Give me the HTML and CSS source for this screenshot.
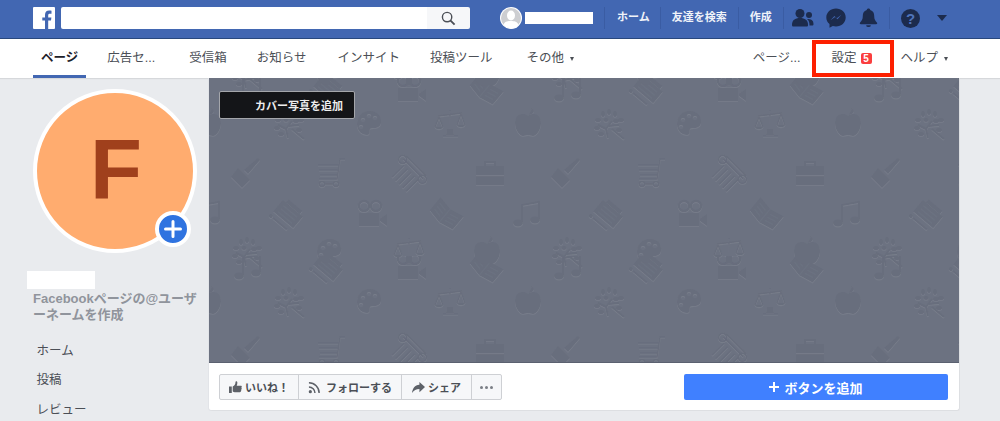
FILE: index.html
```html
<!DOCTYPE html>
<html lang="ja">
<head>
<meta charset="utf-8">
<title>Facebook ページ</title>
<link rel="stylesheet" href="styles.css">
</head>
<body>
<header class="topbar">
  <svg class="logo" viewBox="0 0 22 22"><rect width="22" height="22" rx="1" fill="#fff"/><path d="M15.2 22v-8.4h2.8l.4-3.2h-3.2V8.300c0-.9.300-1.600 1.700-1.600h1.600V3.800c-.5-.1-1.400-.2-2.400-.2-2.500 0-4.100 1.500-4.100 4.300v2.500H9.300v3.200H12V22z" fill="#4267b2"/></svg>
  <div class="search">
    <div class="search-input"></div>
    <div class="search-btn"><svg viewBox="0 0 16 16" width="15" height="15"><circle cx="6.500" cy="6.500" r="5" fill="none" stroke="#4b4f56" stroke-width="1.500"/><path d="M10.200 10.200l4.300 4.300" stroke="#4b4f56" stroke-width="2"/></svg></div>
  </div>
  <div class="top-right">
    <div class="me">
      <svg class="avatar" viewBox="0 0 22 22"><circle cx="11" cy="11" r="11" fill="#fff"/><circle cx="11" cy="11" r="10" fill="#cdced1"/><ellipse cx="11" cy="8.500" rx="4" ry="5" fill="#fff"/><path d="M3.500 18c1-3.500 4-4 7.500-4s6.500.5 7.500 4a10 10 0 0 1-15 0z" fill="#fff"/></svg>
      <span class="redact-name"></span>
    </div>
    <a class="top-link first">ホーム</a>
    <a class="top-link">友達を検索</a>
    <a class="top-link">作成</a>
    <div class="top-icons">
      <svg class="ti" viewBox="0 0 22 20" width="22" height="20"><circle cx="8" cy="5.500" r="4.500" fill="#1c2b4d"/><path d="M0 17c0-5 3-7 8-7s8 2 8 7c0 1-.5 1.500-1.500 1.500h-13C.5 18.500 0 18 0 17z" fill="#1c2b4d"/><circle cx="17" cy="7" r="3" fill="#1c2b4d"/><path d="M15 11c4 0 6.500 1 6.500 5 0 1-.5 1.500-1.500 1.500h-2.500c0-3-.5-5-2.500-6.500z" fill="#1c2b4d"/></svg>
      <svg class="ti" viewBox="0 0 20 20" width="20" height="20"><path d="M10 .500C4.500.500.300 4.400.300 9.400c0 2.700 1.200 5 3.200 6.700v3.700l3.300-1.800c1 .3 2.100.4 3.200.4 5.500 0 9.700-3.900 9.700-9S15.500.500 10 .500z" fill="#1c2b4d"/><path d="M4.500 12.300l3.900-4.400 2.400 2.300 4.600-3.400-3.900 4.500-2.400-2.300z" fill="#4267b2"/></svg>
      <svg class="ti" viewBox="0 0 20 20" width="19" height="20"><path d="M10 0c1 0 1.700.6 1.800 1.500C15 2.300 16 5 16 8c0 3.500 1 5 3 7 .5.800 0 1.500-1 1.500H2c-1 0-1.500-.7-1-1.500 2-2 3-3.500 3-7 0-3 1-5.700 4.200-6.500C8.300.600 9 0 10 0z" fill="#1c2b4d"/><path d="M7.500 17.500h5a2.500 2 0 0 1-5 0z" fill="#1c2b4d"/></svg>
      <span class="ti-sep"></span>
      <span class="help">?</span>
      <span class="top-caret"></span>
    </div>
  </div>
</header>

<nav class="subnav">
  <a class="tab active">ページ</a>
  <a class="tab wide">広告セ...</a>
  <a class="tab tight">受信箱</a>
  <a class="tab">お知らせ</a>
  <a class="tab tight">インサイト</a>
  <a class="tab wide">投稿ツール</a>
  <a class="tab">その他<span class="mini-caret"></span></a>
  <div class="subnav-right">
    <a class="tab">ページ...</a>
    <a class="tab settings">設定<span class="count">5</span></a>
    <a class="tab">ヘルプ<span class="mini-caret"></span></a>
  </div>
</nav>

<main class="page">
  <aside class="side">
    <div class="profile">
      <span class="initial">F</span>
      <span class="add-photo"><svg viewBox="0 0 18 18" width="18" height="18"><path d="M9 1.500v15M1.500 9h15" stroke="#fff" stroke-width="3" stroke-linecap="round"/></svg></span>
    </div>
    <div class="redact-page"></div>
    <p class="username">Facebookページの@ユーザ<br>ーネームを作成</p>
    <ul class="menu">
      <li>ホーム</li>
      <li>投稿</li>
      <li>レビュー</li>
    </ul>
  </aside>

  <section class="card">
    <div class="cover">
      <svg class="cover-art" xmlns="http://www.w3.org/2000/svg" aria-hidden="true">
        <defs>
          <filter id="emboss" x="-5%" y="-5%" width="110%" height="110%">
            <feDropShadow dx="0" dy="1" stdDeviation="0.400" flood-color="#fff" flood-opacity="0.060"/>
          </filter>
          <g id="i-tree"><path d="M-1 15L-3 6-11 2M-3 6L3-2M0 3L10 2M3 6L15 16" fill="none" stroke-width="2"/><ellipse cx="-11" cy="-3" rx="3" ry="2"/><ellipse cx="-6" cy="-9" rx="2" ry="3"/><ellipse cx="0" cy="-11" rx="2" ry="3"/><ellipse cx="6" cy="-9" rx="2" ry="3"/><ellipse cx="12" cy="-3" rx="3" ry="2"/><ellipse cx="-12" cy="5" rx="3" ry="2"/><ellipse cx="-3" cy="-3" rx="2.500" ry="2"/><ellipse cx="7" cy="-2" rx="3" ry="2"/><ellipse cx="-8" cy="11" rx="3" ry="2"/><ellipse cx="10" cy="7" rx="3" ry="2"/></g>
          <g id="i-palette"><path fill-rule="evenodd" d="M1-12C-8-12-12-5-12 1c0 7 5 11 10 11 4 0 2-4 3-6 1-2 10 1 11-6C13-7 8-12 1-12zM-6-5a2.200 2.200 0 1 0 .01 0zM0-9a2.200 2.200 0 1 0 .01 0zM6-7a2.200 2.200 0 1 0 .01 0zM-8 2a2.200 2.200 0 1 0 .01 0z"/></g>
          <g id="i-scales"><path d="M0-13V12M-12-7L12-10M-7 13H8M-11-6L-15 4M-11-6L-7 4M11-9L7 2M11-9L15 2" fill="none" stroke-width="1.300"/><path d="M-15 4h8c-.5 3-7.500 3-8 0zM7 2h8c-.5 3-7.500 3-8 0zM-3 6h6l1 6H-4z"/></g>
          <g id="i-apple"><path d="M0-7C-5-11-13-9-13 0c0 7 5 13 8 13 2 0 3-1 5-1s3 1 5 1c3 0 8-6 8-13C13-9 5-11 0-7z"/><path d="M1-8C2-11 4-13 3-15 7-13 7-9 1-8z"/></g>
          <g id="i-brush"><path d="M-3-3L11-15l2 2L1 1z"/><path d="M-9-5L3 7-5 15-16 4z"/></g>
          <g id="i-cart"><path d="M14-14H9L6 6H-12M-13-8H8M-12-3H7M-11 2H7" fill="none" stroke-width="1.500"/><circle cx="-9" cy="11" r="2.500" fill="none" stroke-width="1.500" /><circle cx="5" cy="11" r="2.500" fill="none" stroke-width="1.500"/><path d="M-6 11H2" fill="none" stroke-width="1.500"/></g>
          <g id="i-column" transform="rotate(45)"><path d="M-14-10H14M-14-6H14M-9-2V15M-4-2V15M1-2V15M6-2V15M11-2V15" fill="none" stroke-width="1.600"/><circle cx="-14" cy="-5" r="4" fill="none" stroke-width="1.500"/><circle cx="14" cy="-5" r="4" fill="none" stroke-width="1.500"/></g>
          <g id="i-case"><path d="M-14-7H14V2H-14zM-14 3.500H14V12H-14z"/><path d="M-5-7V-11H5V-7" fill="none" stroke-width="2"/></g>
          <g id="i-type" transform="rotate(40)"><path d="M-13-6H13V9H-13z" /><path d="M-9-10H9V-6H-9z"/><path d="M-9-2H9M-9 2H9M-9 6H9" fill="none" stroke="#6c7281" stroke-width="1.300"/><circle cx="-12" cy="14" r="2"/><path d="M-9 14H9" fill="none" stroke-width="2"/></g>
          <g id="i-camera"><circle cx="-6" cy="-7" r="5" fill="none" stroke-width="2.500"/><circle cx="6" cy="-7" r="5" fill="none" stroke-width="2.500"/><path d="M-11 0H9V13H-11zM10 6L17 1V13L10 8z"/></g>
          <g id="i-book" transform="rotate(40)"><path d="M-15-8L0-5 15-8V9L0 12-15 9z"/><path d="M0-5V12M-12-3L-3-1M-12 1L-3 3M-12 5L-3 7M3-1L12-3M3 3L12 1M3 7L12 5" fill="none" stroke="#6c7281" stroke-width="1.200"/></g>
          <g id="i-music"><path d="M-6 9V-8L11-11V6" fill="none" stroke-width="2"/><ellipse cx="-10" cy="10" rx="5" ry="3.500"/><ellipse cx="7" cy="7" rx="5" ry="3.500"/></g>
          <pattern id="tile" width="320" height="178" patternUnits="userSpaceOnUse">
            <g class="row">
              <use href="#i-music" x="40" y="10"/><use href="#i-type" x="120" y="10"/><use href="#i-camera" x="200" y="10"/><use href="#i-book" x="278" y="10"/>
              <use href="#i-tree" x="80" y="45"/><use href="#i-palette" x="160" y="45"/><use href="#i-scales" x="241" y="45"/><use href="#i-apple" x="319" y="45"/><use href="#i-apple" x="-1" y="45"/>
              <use href="#i-brush" x="38" y="95"/><use href="#i-cart" x="122" y="95"/><use href="#i-column" x="200" y="95"/><use href="#i-case" x="281" y="95"/>
              <use href="#i-type" x="80" y="135"/><use href="#i-camera" x="161" y="135"/><use href="#i-book" x="238" y="135"/><use href="#i-music" x="319" y="135"/><use href="#i-music" x="-1" y="135"/>
              <use href="#i-tree" x="38" y="173"/><use href="#i-palette" x="120" y="173"/><use href="#i-scales" x="200" y="173"/><use href="#i-apple" x="278" y="173"/>
              <use href="#i-tree" x="38" y="-5"/><use href="#i-palette" x="120" y="-5"/><use href="#i-scales" x="200" y="-5"/><use href="#i-apple" x="278" y="-5"/>
            </g>
          </pattern>
        </defs>
        <rect width="100%" height="100%" fill="url(#tile)"/>
      </svg>
      <button class="add-cover">カバー写真を追加</button>
    </div>
    <div class="actions">
      <div class="btn-group">
        <a class="g-btn like"><svg viewBox="0 0 14 14" width="13" height="13"><path d="M0 6h3v7H0zM4 6c2-1 3-3 3-5 0-1 2-1 2 1 0 1-.300 2-.7 3H13c1 0 1 1.500.3 2 .6.500.5 1.500-.1 2 .3.600.2 1.400-.4 1.800.2.800-.3 1.200-1 1.200H6c-1 0-2-.5-2-1z" fill="#5d6168"/></svg>いいね！</a>
        <a class="g-btn follow"><svg viewBox="0 0 14 14" width="13" height="13"><circle cx="2.500" cy="11.500" r="1.700" fill="#5d6168"/><path d="M1 6.500a6.500 6.500 0 0 1 6.500 6.500M1 2a11 11 0 0 1 11 11" fill="none" stroke="#5d6168" stroke-width="1.600"/></svg>フォローする</a>
        <a class="g-btn share"><svg viewBox="0 0 14 14" width="13" height="13"><path d="M8 1l6 5.500L8 12V8.500C4.500 8.500 2 10 0 13c.5-5 3-8.500 8-9z" fill="#5d6168"/></svg>シェア</a>
        <a class="g-btn more"><i></i><i></i><i></i></a>
      </div>
      <a class="add-button"><span class="plus"></span>ボタンを追加</a>
    </div>
  </section>
</main>
</body>
</html>
```

FILE: styles.css
```css
* { box-sizing: border-box; }
html, body { margin: 0; padding: 0; }
body {
  width: 1000px;
  height: 421px;
  overflow: hidden;
  background: #e9ebee;
  font-family: "Liberation Sans", "Noto Sans CJK JP", sans-serif;
  color: #4b4f56;
}
a { display: block; }

/* top bar */
.topbar {
  display: flex;
  align-items: center;
  height: 39px;
  padding: 0 0 2px 33px;
  background: #4267b2;
  border-bottom: 1px solid #29487d;
}
.logo { width: 22px; height: 22px; flex: none; }
.search { display: flex; width: 409px; height: 22px; margin-left: 6px; border-radius: 2px; overflow: hidden; }
.search-input { flex: 1; background: #fff; }
.search-btn { width: 43px; background: #f6f7f9; display: flex; align-items: center; justify-content: center; }
.top-right { display: flex; align-items: center; margin-left: 30px; height: 22px; }
.me { display: flex; align-items: center; gap: 3px; }
.avatar { width: 22px; height: 22px; display: block; }
.redact-name { display: block; width: 68px; height: 12px; background: #fff; }
.top-link {
  height: 22px;
  line-height: 21px;
  padding: 0 11px;
  font-size: 11px;
  font-weight: 700;
  color: #f0f3f9;
  border-left: 1px solid #3a5ca3;
}
.top-link.first { margin-left: 11px; padding-left: 12px; padding-right: 10px; }
.top-icons { display: flex; align-items: center; height: 22px; border-left: 1px solid #3a5ca3; padding-left: 8px; }
.ti { display: block; margin-right: 12.500px; }
.ti-sep { width: 1px; height: 22px; background: #3a5ca3; margin: 0 11px 0 -1px; }
.help {
  width: 19px; height: 19px; border-radius: 50%;
  background: #1c2b4d; color: #4f74bb;
  font-size: 15px; font-weight: 700; line-height: 19px; text-align: center;
}
.top-caret { width: 0; height: 0; margin-left: 17px; border-style: solid; border-width: 6px 5px 0; border-color: #1c2b4d transparent transparent; }

/* sub navigation */
.subnav {
  display: flex;
  align-items: stretch;
  height: 39px;
  padding-left: 33px;
  background: #fff;
  box-shadow: 0 1px 1px rgba(0,0,0,.08);
}
.tab {
  font-size: 12.500px;
  line-height: 39px;
  color: #4b4f56;
  margin-right: 31px;
  white-space: nowrap;
}
.tab.wide { margin-right: 34px; }
.tab.tight { margin-right: 30px; }
.tab.active {
  color: #1d2129;
  font-weight: 700;
  padding: 0 8px;
  margin-right: 21px;
  border-bottom: 3px solid #4267b2;
}
.mini-caret {
  display: inline-block;
  vertical-align: middle;
  margin-left: 6px;
  width: 0; height: 0;
  border-style: solid;
  border-width: 4px 2.500px 0;
  border-color: #4b4f56 transparent transparent;
}
.subnav-right { display: flex; margin-left: auto; padding-right: 52px; }
.subnav-right .tab { margin: 0; }
.subnav-right .tab:first-child { margin-right: 12px; }
.tab.settings {
  width: 82px;
  height: 37px;
  margin: 1px 6px 0 0;
  border: 4px solid #fd2000;
  padding-left: 15px;
  line-height: 29px;
  display: flex;
  align-items: center;
}
.count {
  display: block;
  margin-left: 4px;
  width: 11px;
  height: 11px;
  border-radius: 2px;
  background: #fa3e3e;
  color: #fff;
  font-size: 10px;
  font-weight: 700;
  line-height: 11px;
  text-align: center;
}

/* page */
.page { display: flex; align-items: flex-start; padding-left: 27px; }
.side { width: 182px; flex: none; }
.profile {
  position: relative;
  width: 164px;
  height: 164px;
  margin: 11px 0 0 6px;
  padding-bottom: 4px;
  border: 4px solid #fff;
  border-radius: 50%;
  background: #ffac6f;
  display: flex;
  align-items: center;
  justify-content: center;
}
.initial { font-size: 85px; font-weight: 700; color: #a0401c; line-height: 1; padding-left: 2px; }
.add-photo {
  position: absolute;
  left: 118px;
  top: 118px;
  width: 36px;
  height: 36px;
  border: 4px solid #fff;
  border-radius: 50%;
  background: #2f73e0;
  display: flex;
  align-items: center;
  justify-content: center;
}
.redact-page { width: 68px; height: 18px; margin-top: 18px; background: #fff; }
.username {
  margin: 2px 0 0 6px;
  font-size: 13px;
  font-weight: 700;
  line-height: 16px;
  color: #90949c;
  white-space: nowrap;
}
.menu { list-style: none; margin: 13.500px 0 0; padding: 0 0 0 9.500px; }
.menu li { height: 29.500px; line-height: 29.500px; font-size: 12.500px; color: #4b4f56; }

.card {
  width: 751px;
  height: 333px;
  background: #fff;
  border: 1px solid #dddfe2;
  border-top: 0;
  border-left-width: 0;
  border-radius: 0 0 3px 3px;
  box-shadow: -1px 0 0 #e2e4e8;
}
.cover {
  position: relative;
  height: 285px;
  background: #6c7281;
  border-bottom: 1px solid #5b6170;
  overflow: hidden;
}
.cover-art { display: block; width: 100%; height: 100%; }
.row { fill: #686e7d; stroke: #686e7d; stroke-width: 0; filter: url(#emboss); }
.add-cover {
  position: absolute;
  left: 10px;
  top: 13px;
  width: 136px;
  height: 28px;
  padding: 0 0 0 35px;
  text-align: left;
  font-family: inherit;
  font-size: 11px;
  font-weight: 700;
  color: #eee;
  background: #141518;
  border: 1px solid #a4a6ab;
  border-radius: 2px;
}
.actions { display: flex; align-items: center; justify-content: space-between; padding: 11px 11px 0 10px; }
.btn-group { display: flex; height: 26px; border: 1px solid #ced0d4; border-radius: 2px; background: #f6f7f9; }
.g-btn {
  display: flex;
  align-items: center;
  justify-content: center;
  gap: 3px;
  font-size: 11px;
  font-weight: 700;
  color: #4b4f56;
  border-left: 1px solid #ced0d4;
  white-space: nowrap;
}
.g-btn:first-child { border-left: 0; }
.like { width: 78px; }
.follow { width: 103px; gap: 5px; }
.share { width: 70px; }
.more { width: 30px; gap: 2px; }
.more i { display: block; width: 3px; height: 3px; border-radius: 50%; background: #7a7e85; }
.add-button {
  display: flex;
  align-items: center;
  justify-content: center;
  width: 264px;
  height: 26px;
  border-radius: 2px;
  background: #4080ff;
  color: #fff;
  font-size: 13px;
  font-weight: 700;
}
.plus {
  display: block;
  width: 10px;
  height: 10px;
  margin-right: 5px;
  background:
    linear-gradient(#fff, #fff) center / 10px 2px no-repeat,
    linear-gradient(#fff, #fff) center / 2px 10px no-repeat;
}
```
